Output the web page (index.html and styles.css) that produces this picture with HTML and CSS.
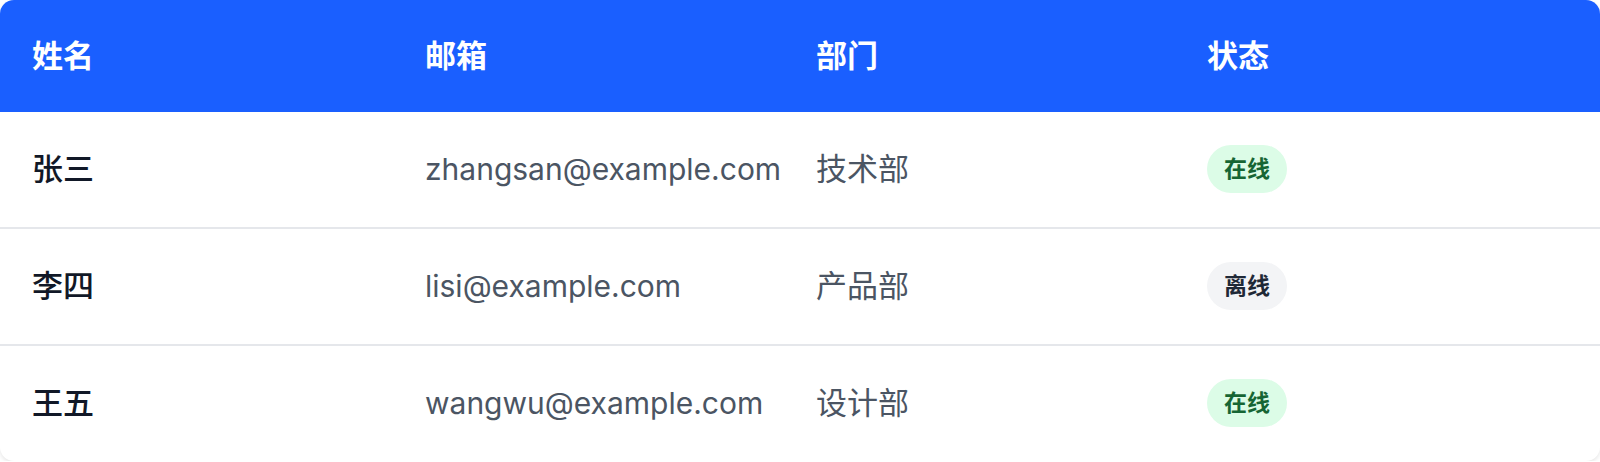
FILE: index.html
```html
<!DOCTYPE html>
<html lang="zh-CN">
<head>
    <meta charset="UTF-8">
    <meta name="viewport" content="width=device-width, initial-scale=1.0">
    <title>用户列表</title>
    <link rel="stylesheet" href="styles.css">
</head>
<body>
    <div class="table-card">
        <table class="user-table">
            <colgroup>
                <col class="col-name">
                <col class="col-email">
                <col class="col-dept">
                <col>
            </colgroup>
            <thead>
                <tr>
                    <th>姓名</th>
                    <th>邮箱</th>
                    <th>部门</th>
                    <th>状态</th>
                </tr>
            </thead>
            <tbody>
                <tr>
                    <td class="name">张三</td>
                    <td class="email">zhangsan@example.com</td>
                    <td>技术部</td>
                    <td><span class="badge online">在线</span></td>
                </tr>
                <tr>
                    <td class="name">李四</td>
                    <td class="email">lisi@example.com</td>
                    <td>产品部</td>
                    <td><span class="badge offline">离线</span></td>
                </tr>
                <tr>
                    <td class="name">王五</td>
                    <td class="email">wangwu@example.com</td>
                    <td>设计部</td>
                    <td><span class="badge online">在线</span></td>
                </tr>
            </tbody>
        </table>
    </div>
</body>
</html>
```

FILE: styles.css
```css
body {
    margin: 0;
    background: #fff;
    font-family: Inter, 'Noto Sans CJK SC', sans-serif;
}

.table-card {
    background: #fff;
    border-radius: 14px;
    overflow: hidden;
    box-shadow: 0 2px 4px rgba(0,0,0,0.1);
}

.user-table {
    width: 100%;
    border-collapse: collapse;
    table-layout: fixed;
}

.col-name { width: 393px; }
.col-email { width: 391px; }
.col-dept { width: 391px; }

th {
    background: #1a5fff;
    color: #fff;
    font-size: 31px;
    font-weight: 700;
    text-align: left;
    line-height: 48px;
    padding: 32px 32px;
}

td {
    font-size: 31px;
    color: #4b5563;
    line-height: 48px;
    padding: 33px 32px 34px;
    border-bottom: 2px solid #e5e7eb;
    white-space: nowrap;
    vertical-align: middle;
}

tbody tr:last-child td {
    border-bottom: none;
}

td.name {
    color: #111827;
    font-weight: 500;
}

td.email {
    font-size: 30px;
}

.badge {
    display: inline-block;
    font-size: 23px;
    font-weight: 600;
    line-height: 32px;
    padding: 8px 17px;
    border-radius: 999px;
    vertical-align: top;
}

.online {
    background: #dcfce7;
    color: #166534;
}

.offline {
    background: #f3f4f6;
    color: #1f2937;
}
```
